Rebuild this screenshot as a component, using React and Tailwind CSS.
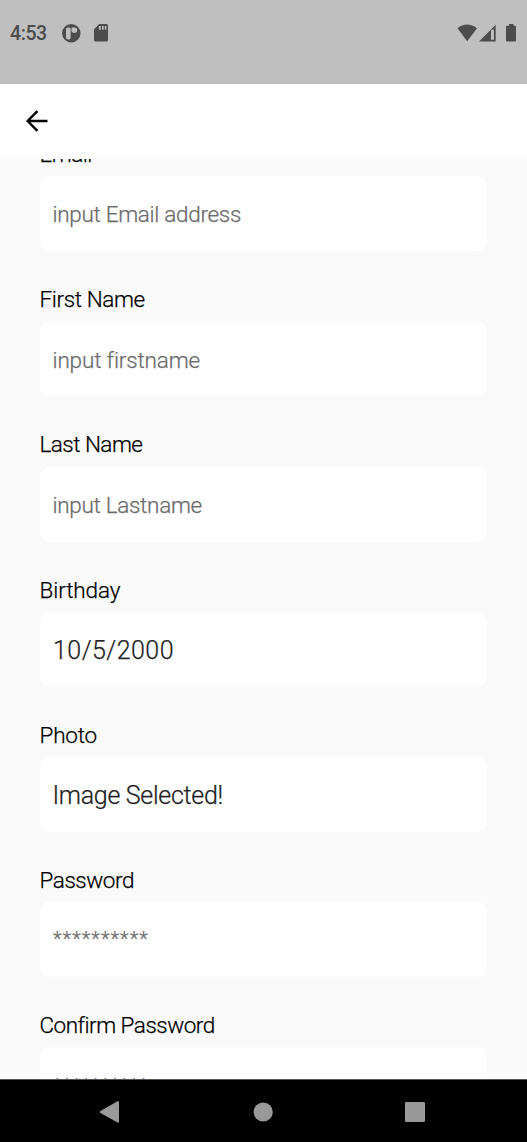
import React from 'react';

const hint = 'text-[22.5px] text-[#6b6b6b] pt-[3px]';
const value = 'text-[25px] text-[#222] pt-[2px]';
const mask = 'text-[20px] tracking-[1.1px] text-[#6b6b6b] pl-[0.5px]';

const fields = [
  { label: 'Email', labelTracking: 'tracking-[-0.5px]', text: 'input Email address', style: `${hint} tracking-[-0.3px]` },
  { label: 'First Name', labelTracking: 'tracking-[-0.38px]', text: 'input firstname', style: `${hint} tracking-[-0.15px]` },
  { label: 'Last Name', labelTracking: 'tracking-[-0.53px]', text: 'input Lastname', style: `${hint} tracking-[-0.3px]` },
  { label: 'Birthday', labelTracking: 'tracking-[-0.1px]', text: '10/5/2000', style: `${value} tracking-[0.45px] pl-[0.5px]` },
  { label: 'Photo', labelTracking: 'tracking-[-0.2px]', text: 'Image Selected!', style: `${value} tracking-[-0.3px]` },
  { label: 'Password', labelTracking: 'tracking-[-0.45px]', text: '**********', style: `${mask} pb-[1px]` },
  { label: 'Confirm Password', labelTracking: 'tracking-[-0.5px]', text: '**********', style: `${mask} pt-[3px]` },
];

function StatusBar() {
  return (
    <div className="flex h-[83.5px] shrink-0 items-start justify-between bg-[#bfbfbf] pl-[10px] pr-[10px] text-[#4c4c4c]">
      <div className="flex h-[68px] items-center">
        <span className="w-[52px] text-[19.5px] font-medium leading-none tracking-[-0.4px]">4:53</span>
        <svg className="-mt-px h-[19px] w-[19px]" viewBox="0 0 19 19">
          <circle cx="9.3" cy="9.3" r="9.2" fill="#4c4c4c" />
          <rect x="4" y="3.6" width="4.6" height="12" rx="1.8" fill="#bfbfbf" />
          <circle cx="12.4" cy="6.2" r="2.7" fill="#bfbfbf" />
          <path d="M9.6 3.6h2.4v4H9.6z" fill="#bfbfbf" />
        </svg>
        <svg className="-mt-[2px] ml-[13px] h-[18px] w-[14px]" viewBox="0 0 14 18">
          <path d="M5.2 0H12.4Q14 0 14 1.6V16Q14 17.6 12.4 17.6H1.6Q0 17.6 0 16V5.2Z" fill="#4c4c4c" />
          <path d="M5 2h1.8v3.7H5zM8 2h1.6v3.7H8zM10.8 2h1.6v3.7h-1.6z" fill="#bfbfbf" />
        </svg>
      </div>
      <div className="flex h-[66px] items-center">
        <svg className="h-[18px] w-[60px]" viewBox="0 0 60 18">
          <path d="M.5 4.3Q10-3.2 20 4.3L10.2 17.2Z" fill="#4c4c4c" />
          <path d="M22 17.5 38.7.7V17.5Z" fill="#4c4c4c" />
          <path d="M34 5.7H36.9V15.8H34Z" fill="#bfbfbf" />
          <path d="M52 0H56.5V1.8H58Q59 1.8 59 2.8V16.5Q59 17.5 58 17.5H50Q49 17.5 49 16.5V2.8Q49 1.8 50 1.8H52Z" fill="#4c4c4c" />
        </svg>
      </div>
    </div>
  );
}

function Field({ field }) {
  return (
    <div className="h-[145.2px] pt-[28px]">
      <label className={`block h-[42.2px] text-[22.5px] leading-[41.4px] text-black ${field.labelTracking}`}>{field.label}</label>
      <div className="flex h-[75px] items-center rounded-[10px] bg-white pl-[13px]">
        <span className={field.style}>{field.text}</span>
      </div>
    </div>
  );
}

export default function App() {
  return (
    <div className="flex h-[1142px] w-full flex-col overflow-hidden bg-[#fafafa] font-['Roboto',sans-serif]">
      <StatusBar />
      <header className="flex h-[75.5px] shrink-0 items-center bg-white pl-[26px]">
        <svg className="h-[22px] w-[22px]" viewBox="0 0 22 22" fill="none" stroke="#000" strokeWidth="2.4">
          <path d="M21.5 11H2M11.4 1.1 1.6 11l9.8 9.9" />
        </svg>
      </header>
      <main className="min-h-0 flex-1 overflow-hidden pl-[39.5px] pr-[40.5px] font-light whitespace-nowrap [-webkit-text-stroke:0.25px]">
        <div className="-mt-[52.9px]">
          {fields.map((field) => <Field key={field.label} field={field} />)}
        </div>
      </main>
      <nav className="flex h-[63px] shrink-0 items-center border-t border-[#555] bg-black pl-[99px]">
        <svg className="mt-[1px] h-[22px] w-[326px]" viewBox="0 0 326 22" fill="#999">
          <path d="M1.5 10 18.5.3Q20 0 20 1.5V20.5Q20 22 18.5 21.5L1.5 12Q0 11 1.5 10Z" />
          <circle cx="164.2" cy="11" r="9.6" />
          <rect x="306" y="1" width="20" height="20" rx="1.3" />
        </svg>
      </nav>
    </div>
  );
}
